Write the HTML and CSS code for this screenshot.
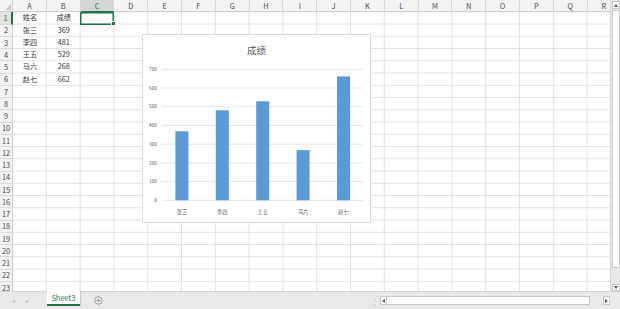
FILE: index.html
```html
<!DOCTYPE html>
<html lang="zh-CN">
<head>
<meta charset="utf-8">
<title>Sheet3</title>
<link rel="stylesheet" href="styles.css">
</head>
<body>
<div class="app">
  <div class="main">
    <div class="sheet">
      <div class="corner"><svg class="corner-tri" viewBox="0 0 6 6"><polygon points="6,0 6,6 0,6"/></svg></div>
      <div class="ch">A</div><div class="ch">B</div><div class="ch sel">C</div><div class="ch">D</div><div class="ch">E</div><div class="ch">F</div><div class="ch">G</div><div class="ch">H</div><div class="ch">I</div><div class="ch">J</div><div class="ch">K</div><div class="ch">L</div><div class="ch">M</div><div class="ch">N</div><div class="ch">O</div><div class="ch">P</div><div class="ch">Q</div><div class="ch">R</div>

      <div class="rh sel">1</div><div class="c">姓名</div><div class="c">成绩</div><div class="c active"></div>
      <div class="rh">2</div><div class="c">张三</div><div class="c">369</div>
      <div class="rh">3</div><div class="c">李四</div><div class="c">481</div>
      <div class="rh">4</div><div class="c">王五</div><div class="c">529</div>
      <div class="rh">5</div><div class="c">马六</div><div class="c">268</div>
      <div class="rh">6</div><div class="c">赵七</div><div class="c">662</div>
      <div class="rh">7</div>
      <div class="rh">8</div>
      <div class="rh">9</div>
      <div class="rh">10</div>
      <div class="rh">11</div>
      <div class="rh">12</div>
      <div class="rh">13</div>
      <div class="rh">14</div>
      <div class="rh">15</div>
      <div class="rh">16</div>
      <div class="rh">17</div>
      <div class="rh">18</div>
      <div class="rh">19</div>
      <div class="rh">20</div>
      <div class="rh">21</div>
      <div class="rh">22</div>
      <div class="rh">23</div>

      <div class="chart">
        <svg class="chart-svg" width="227" height="187" viewBox="0 0 227 187">
          <text class="ct" x="113.5" y="18.5" text-anchor="middle">成绩</text>
          <g class="gl">
            <line x1="18.7" x2="219.7" y1="34.3" y2="34.3"/>
            <line x1="18.7" x2="219.7" y1="53" y2="53"/>
            <line x1="18.7" x2="219.7" y1="71.7" y2="71.7"/>
            <line x1="18.7" x2="219.7" y1="90.5" y2="90.5"/>
            <line x1="18.7" x2="219.7" y1="109.2" y2="109.2"/>
            <line x1="18.7" x2="219.7" y1="127.9" y2="127.9"/>
            <line x1="18.7" x2="219.7" y1="146.6" y2="146.6"/>
            <line x1="18.7" x2="219.7" y1="165.3" y2="165.3"/>
          </g>
          <g class="yl" text-anchor="end">
            <text x="14" y="36">700</text>
            <text x="14" y="54.7">600</text>
            <text x="14" y="73.4">500</text>
            <text x="14" y="92.2">400</text>
            <text x="14" y="110.9">300</text>
            <text x="14" y="129.6">200</text>
            <text x="14" y="148.3">100</text>
            <text x="14" y="167">0</text>
          </g>
          <g class="bars">
            <rect x="32.4" y="96.25" width="13" height="69.05"/>
            <rect x="72.8" y="75.3" width="13" height="90"/>
            <rect x="113.2" y="66.3" width="13" height="99"/>
            <rect x="153.6" y="115.15" width="13" height="50.15"/>
            <rect x="194" y="41.4" width="13" height="123.9"/>
          </g>
          <g class="xl" text-anchor="middle">
            <text x="38.9" y="178.6">张三</text>
            <text x="79.3" y="178.6">李四</text>
            <text x="119.7" y="178.6">王五</text>
            <text x="160.1" y="178.6">马六</text>
            <text x="200.5" y="178.6">赵七</text>
          </g>
        </svg>
      </div>
    </div>

    <div class="vscroll">
      <div class="vbtn"><svg viewBox="0 0 4 3"><polygon points="2,0 4,3 0,3"/></svg></div>
      <div class="vthumb"></div>
      <div class="vtrack"></div>
      <div class="vbtn"><svg viewBox="0 0 4 3"><polygon points="0,0 4,0 2,3"/></svg></div>
    </div>
  </div>

  <div class="tabbar">
    <div class="nav"><span>◂</span><span>▸</span></div>
    <div class="tab">Sheet3</div>
    <div class="add">
      <svg viewBox="0 0 10 10"><circle cx="5" cy="5" r="4.2"/><line x1="5" y1="2.8" x2="5" y2="7.2"/><line x1="2.8" y1="5" x2="7.2" y2="5"/></svg>
    </div>
    <div class="spacer"></div>
    <div class="grip">⋮</div>
    <div class="hscroll">
      <div class="hbtn"><svg viewBox="0 0 3 4"><polygon points="3,0 3,4 0,2"/></svg></div>
      <div class="htrack"></div>
      <div class="hgap"></div>
      <div class="hbtn"><svg viewBox="0 0 3 4"><polygon points="0,0 3,2 0,4"/></svg></div>
    </div>
  </div>
</div>
</body>
</html>
```

FILE: styles.css
```css
* {
  box-sizing: border-box;
  margin: 0;
  padding: 0;
}

html, body {
  width: 620px;
  height: 309px;
  overflow: hidden;
  background: #fff;
}

body {
  font-family: "Noto Sans CJK SC", "Noto Sans", "Liberation Sans", sans-serif;
  color: #222;
}

.app {
  display: flex;
  flex-direction: column;
  width: 620px;
  height: 309px;
}

.main {
  display: flex;
  height: 291px;
  overflow: hidden;
}

.sheet {
  position: relative;
  width: 610px;
  height: 291px;
  overflow: hidden;
  display: grid;
  grid-template-columns: 13px repeat(18, 33.8px);
  grid-template-rows: repeat(24, 12.25px);
  grid-auto-flow: row;
  background-color: #fff;
  background-image:
    linear-gradient(to right, transparent calc(100% - 1px), #e1e1e1 calc(100% - 1px)),
    linear-gradient(to bottom, transparent calc(100% - 1px), #e1e1e1 calc(100% - 1px));
  background-size: 33.8px 12.25px;
  background-position: 13px 12.25px;
}

.corner {
  background: #f3f3f3;
  border-right: 1px solid #cfcfcf;
  border-bottom: 1px solid #cfcfcf;
  display: flex;
  align-items: flex-end;
  justify-content: flex-end;
  padding: 0 1px 1px 0;
}

.corner-tri {
  width: 6px;
  height: 6px;
  fill: #c9c9c9;
}

.ch {
  background: #f3f3f3;
  border-right: 1px solid #d9d9d9;
  border-bottom: 1px solid #cfcfcf;
  display: flex;
  align-items: center;
  justify-content: center;
  font-size: 7.4px;
  line-height: 1;
  color: #4a4a4a;
}

.ch.sel {
  background: #d6d6d6;
  color: #217346;
  border-bottom: 1px solid #217346;
}

.rh {
  grid-column: 1;
  background: #f3f3f3;
  border-right: 1px solid #cfcfcf;
  border-bottom: 1px solid #dadada;
  display: flex;
  align-items: center;
  justify-content: center;
  font-size: 7.4px;
  line-height: 1;
  color: #4a4a4a;
}

.rh.sel {
  background: #e2e2e2;
  color: #217346;
  border-right: 2px solid #217346;
}

.c {
  display: flex;
  align-items: center;
  justify-content: center;
  font-size: 7.2px;
  line-height: 1;
  color: #333;
  padding-bottom: 1px;
}

.c.active {
  position: relative;
  box-shadow: inset 0 0 0 1.5px #217346;
  margin: -0.5px 0 0 -0.5px;
}

.c.active::after {
  content: "";
  position: absolute;
  right: -1.5px;
  bottom: -1.5px;
  width: 3px;
  height: 3px;
  background: #217346;
  border: 0.5px solid #fff;
}

/* chart overlay */
.chart {
  position: absolute;
  left: 143px;
  top: 35px;
  width: 227px;
  height: 187px;
  background: #fff;
  box-shadow: 0 0 0 1px #dcdcdc, 0 0 2px rgba(0, 0, 0, 0.08);
}

.chart-svg {
  display: block;
}

.ct {
  font-size: 9.5px;
  fill: #595959;
}

.gl line {
  stroke: #dedede;
  stroke-width: 0.8;
}

.yl text {
  font-size: 4.8px;
  fill: #595959;
}

.xl text {
  font-size: 5.2px;
  fill: #595959;
}

.bars rect {
  fill: #5b9bd5;
}

/* vertical scrollbar */
.vscroll {
  width: 10px;
  height: 291px;
  background: #e8e8e8;
  border-left: 1px solid #d6d6d6;
  display: flex;
  flex-direction: column;
  align-items: center;
  padding: 1px 0 0 0;
}

.vbtn {
  width: 8px;
  height: 8px;
  background: #fff;
  border: 1px solid #c8c8c8;
  display: flex;
  align-items: center;
  justify-content: center;
}

.vbtn svg {
  width: 4px;
  height: 3px;
  fill: #555;
}

.vthumb {
  width: 8px;
  height: 258px;
  margin-top: 1px;
  background: #fff;
  border: 1px solid #c8c8c8;
}

.vtrack {
  flex: 1;
}

.vscroll .vbtn:last-child {
  height: 7px;
}

/* sheet tab bar */
.tabbar {
  height: 18px;
  background: #e9e9e9;
  border-top: 1px solid #d4d4d4;
  display: flex;
  align-items: stretch;
  font-size: 7px;
}

.nav {
  width: 47px;
  display: flex;
  align-items: center;
  gap: 11px;
  padding-left: 12px;
  color: #c2c2c2;
  font-size: 6px;
}

.tab {
  width: 33px;
  height: 15px;
  margin-top: -1px;
  background: #fff;
  color: #2b7d4f;
  border-bottom: 2px solid #217346;
  display: flex;
  align-items: center;
  justify-content: center;
  font-size: 7.5px;
  line-height: 1;
  box-shadow: 1px 0 1px rgba(0, 0, 0, 0.12);
}

.add {
  margin-left: 14px;
  display: flex;
  align-items: center;
}

.add svg {
  width: 9px;
  height: 9px;
  fill: none;
  stroke: #8f8f8f;
  stroke-width: 0.9;
}

.spacer {
  flex: 1;
}

.grip {
  width: 12px;
  display: flex;
  align-items: center;
  justify-content: center;
  color: #b5b5b5;
  font-size: 8px;
  margin-right: -1px;
}

.hscroll {
  width: 230px;
  height: 9px;
  align-self: center;
  margin-right: 10px;
  display: flex;
}

.hbtn {
  width: 7px;
  height: 9px;
  background: #fff;
  border: 1px solid #c8c8c8;
  display: flex;
  align-items: center;
  justify-content: center;
}

.hbtn svg {
  width: 3px;
  height: 4px;
  fill: #555;
}

.htrack {
  width: 203px;
  height: 9px;
  background: #fff;
  border: 1px solid #c8c8c8;
  border-left: none;
}

.hgap {
  flex: 1;
}
```
